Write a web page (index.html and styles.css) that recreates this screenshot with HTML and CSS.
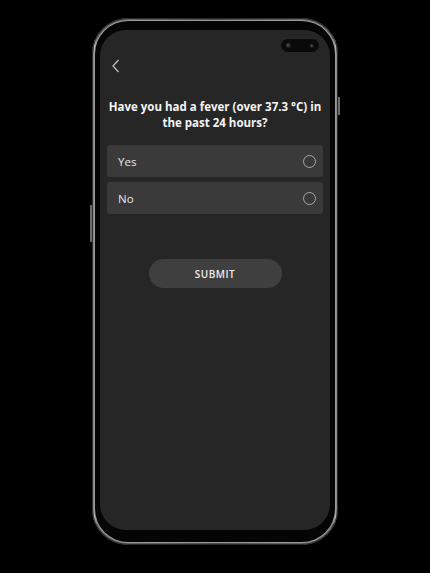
FILE: index.html
```html
<!DOCTYPE html>
<html>
<head>
<meta charset="utf-8">
<link rel="stylesheet" href="styles.css">
</head>
<body>
<div class="stage">
  <div class="phone">
    <span class="btn-left"></span>
    <span class="btn-right"></span>
    <div class="bezel">
      <div class="screen">
        <div class="camera"><span class="lens"></span><span class="lens small"></span></div>
        <div class="topbar">
          <svg class="back" width="10" height="14" viewBox="0 0 10 14"><path d="M7.5 1 L2 7 L7.5 13" fill="none" stroke="#bdbdbd" stroke-width="1.3"/></svg>
        </div>
        <h1 class="title">Have you had a fever (over 37.3 °C) in<br>the past 24 hours?</h1>
        <div class="options">
          <div class="option"><span>Yes</span><span class="radio"></span></div>
          <div class="option"><span>No</span><span class="radio"></span></div>
        </div>
        <div class="actions">
          <button class="submit">SUBMIT</button>
        </div>
      </div>
    </div>
  </div>
</div>
</body>
</html>
```
FILE: styles.css
```css
html, body {
  margin: 0;
  padding: 0;
  background: #000;
}
.stage {
  width: 430px;
  height: 573px;
  padding: 18px 0 0 92px;
  box-sizing: border-box;
}
.phone {
  position: relative;
  width: 246px;
  height: 527px;
  box-sizing: border-box;
  padding: 3px;
  border-radius: 36px;
  background: linear-gradient(90deg, #3a3a3a 0%, #bdbdbd 1%, #6e6e6e 2.2%, #4a4a4a 50%, #6e6e6e 97.8%, #bdbdbd 99%, #3a3a3a 100%);
  box-shadow: inset 0 0 0 1px #2a2a2a;
}
.btn-left {
  position: absolute;
  left: -2px;
  top: 187px;
  width: 2px;
  height: 37px;
  background: #6c6c6c;
  border-radius: 1px 0 0 1px;
}
.btn-right {
  position: absolute;
  right: -2px;
  top: 79px;
  width: 2px;
  height: 18px;
  background: #6c6c6c;
  border-radius: 0 1px 1px 0;
}
.bezel {
  height: 100%;
  box-sizing: border-box;
  padding: 9px 5px 12px 5px;
  border-radius: 33px;
  background: #050505;
  box-shadow: 0 0 0 1px #9a9a9a;
}
.screen {
  position: relative;
  height: 100%;
  border-radius: 26px;
  background: #262626;
  font-family: "Open Sans", "Lato", sans-serif;
  color: #f2f2f2;
  overflow: hidden;
}
.camera {
  position: absolute;
  left: 181px;
  top: 9px;
  width: 38px;
  height: 13px;
  border-radius: 7px;
  background: #0a0a0a;
  display: flex;
  align-items: center;
  justify-content: space-between;
  padding: 0 5px;
  box-sizing: border-box;
}
.lens {
  width: 5px;
  height: 5px;
  border-radius: 50%;
  background: radial-gradient(circle at 40% 40%, #4a5560 0%, #1a1d22 60%);
}
.lens.small {
  width: 4px;
  height: 4px;
}
.topbar {
  height: 69px;
  padding: 29px 0 0 11px;
  box-sizing: border-box;
}
.back {
  display: block;
}
.title {
  margin: 0;
  padding: 0;
  text-align: center;
  white-space: nowrap;
  font-size: 11.5px;
  line-height: 16px;
  font-weight: 700;
  color: #f4f4f4;
}
.options {
  margin: 14px 7px 0 7px;
  display: flex;
  flex-direction: column;
  gap: 5px;
}
.option {
  height: 32px;
  border-radius: 3px;
  background: #3a3a3a;
  display: flex;
  align-items: center;
  justify-content: space-between;
  padding: 0 7px 0 11px;
  font-size: 11.5px;
  color: #e6e6e6;
}
.radio {
  width: 11px;
  height: 11px;
  border: 1.5px solid #a8a8a8;
  border-radius: 50%;
}
.actions {
  display: flex;
  justify-content: center;
  margin-top: 45px;
}
.submit {
  width: 133px;
  height: 29px;
  border: none;
  border-radius: 15px;
  background: #3f3f3f;
  color: #ececec;
  font-family: "Open Sans", "Lato", sans-serif;
  font-size: 10px;
  font-weight: 600;
  letter-spacing: 0.5px;
  padding: 0;
}
```
